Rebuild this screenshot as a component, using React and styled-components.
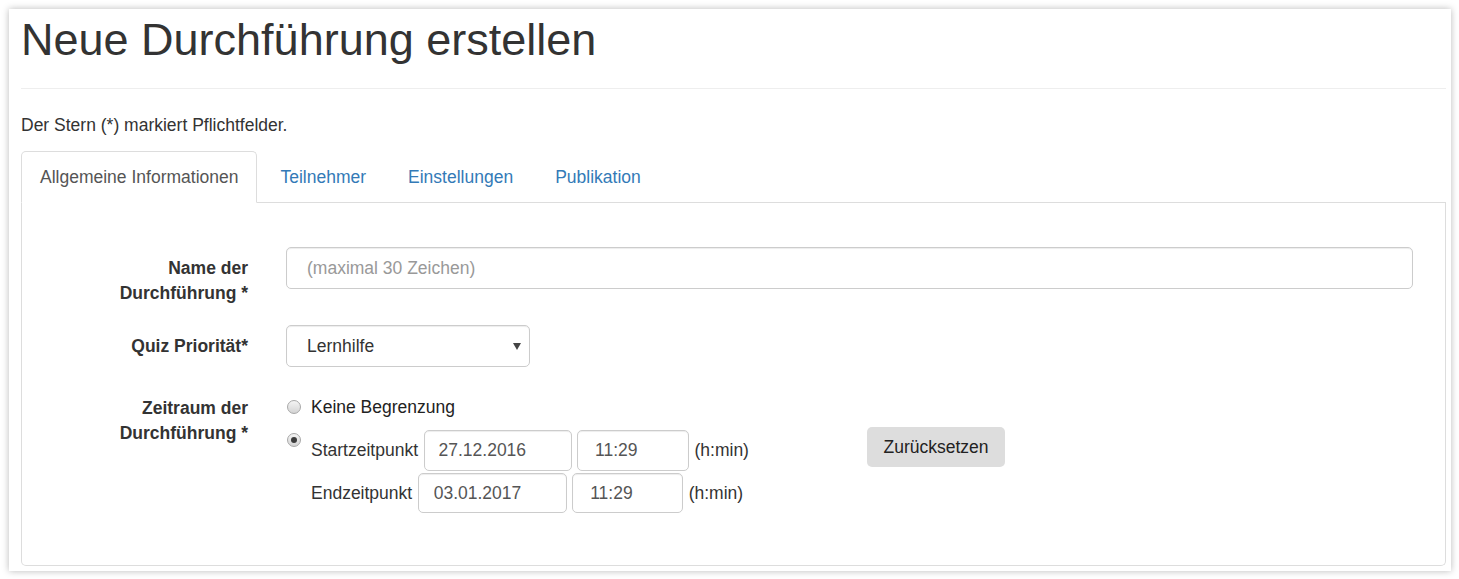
import React from 'react'
import styled, { createGlobalStyle } from 'styled-components'

const GlobalStyle = createGlobalStyle`
  body {
    margin: 0;
    background: #fff;
    font-family: 'Liberation Sans', Arial, sans-serif;
    font-size: 17.5px;
    line-height: 25px;
    color: #333;
  }
  * {
    box-sizing: border-box;
  }
`

const Card = styled.div`
  margin: 9px 8px 8px 9px;
  padding: 0 5px 5px 12px;
  background: #fff;
  box-shadow: 0 0 7px rgba(0, 0, 0, 0.28);
`

const PageHeader = styled.div`
  padding-top: 6px;
  padding-bottom: 23px;
  border-bottom: 1px solid #eee;
`

const Title = styled.h1`
  margin: 0;
  font-size: 45px;
  line-height: 49.5px;
  font-weight: 500;
  color: #333;
`

const Hint = styled.p`
  margin: 24.5px 0 12.5px;
`

const Tabs = styled.ul`
  display: flex;
  margin: 0;
  padding: 0;
  list-style: none;
  border-bottom: 1px solid #ddd;
`

const Tab = styled.li`
  margin-right: 4px;
  margin-bottom: -1px;
  padding: 13px 18px 12px;
  border: 1px solid ${props => (props.active ? '#ddd' : 'transparent')};
  border-bottom-color: ${props => (props.active ? '#fff' : 'transparent')};
  border-radius: 5px 5px 0 0;
  background: ${props => (props.active ? '#fff' : 'transparent')};
  color: ${props => (props.active ? '#555' : '#337ab7')};
  cursor: pointer;
`

const Panel = styled.div`
  border: 1px solid #ddd;
  border-top: none;
  border-radius: 0 0 5px 5px;
  padding: 44px 32px 52px 0;
`

const FormRow = styled.div`
  display: grid;
  grid-template-columns: 226px 1fr;
  column-gap: 38px;
  align-items: start;
  margin-bottom: ${props => (props.last ? '0' : '18.75px')};
`

const Label = styled.label`
  padding-top: 9.5px;
  padding-left: 34px;
  text-align: right;
  font-weight: bold;
  color: #333;
`

const TextInput = styled.input`
  width: 100%;
  height: 42.5px;
  padding: 1px 20px 0;
  border: 1px solid #ccc;
  border-radius: 5px;
  box-shadow: inset 0 1px 1px rgba(0, 0, 0, 0.075);
  font-family: inherit;
  font-size: 17.5px;
  color: #555;
  &::placeholder {
    color: #999;
  }
`

const SelectWrap = styled.div`
  position: relative;
  width: 244px;
`

const Select = styled.select`
  width: 100%;
  height: 42.5px;
  padding: 0 20px;
  border: 1px solid #ccc;
  border-radius: 5px;
  background: #fff;
  box-shadow: inset 0 1px 1px rgba(0, 0, 0, 0.075);
  appearance: none;
  font-family: inherit;
  font-size: 17.5px;
  color: #333;
`

const Caret = styled.svg`
  position: absolute;
  right: 9px;
  top: 17px;
  pointer-events: none;
`

const RadioGroup = styled.div`
  padding-top: 8.75px;
`

const RadioRow = styled.div`
  display: flex;
  align-items: flex-start;
  gap: 10px;
  margin-top: ${props => props.offset || '0'};
  color: #222;
`

const Radio = styled.span`
  flex: none;
  width: 14px;
  height: 14px;
  margin-top: ${props => props.top};
  margin-left: 1px;
  border: 1px solid #a8a8a8;
  border-radius: 50%;
  background: linear-gradient(#f4f4f4, #d4d4d4);
  display: flex;
  align-items: center;
  justify-content: center;
  &::after {
    content: '';
    display: ${props => (props.checked ? 'block' : 'none')};
    width: 6px;
    height: 6px;
    border-radius: 50%;
    background: #3c3c3c;
  }
`

const TimeBlock = styled.div`
  display: flex;
  flex-direction: column;
  gap: 2px;
  padding-top: 3px;
`

const TimeLine = styled.div`
  display: flex;
  align-items: center;
  gap: 5.5px;
  color: #333;
`

const SmallInput = styled.input`
  width: ${props => props.w}px;
  height: 40.5px;
  padding: 0 0 0 ${props => props.pad}px;
  border: 1px solid #ccc;
  border-radius: 5px;
  box-shadow: inset 0 1px 1px rgba(0, 0, 0, 0.075);
  font-family: inherit;
  font-size: 17.5px;
  color: #555;
`

const ResetButton = styled.button`
  align-self: flex-start;
  margin-left: 113px;
  margin-top: -3px;
  height: 40px;
  padding: 0 16px;
  border: none;
  border-radius: 5px;
  background: #ddd;
  font-family: inherit;
  font-size: 17.5px;
  color: #222;
  cursor: pointer;
`

function App() {
  return (
    <>
      <GlobalStyle />
      <Card>
        <PageHeader>
          <Title>Neue Durchführung erstellen</Title>
        </PageHeader>
        <Hint>Der Stern (*) markiert Pflichtfelder.</Hint>
        <Tabs>
          <Tab active>Allgemeine Informationen</Tab>
          <Tab>Teilnehmer</Tab>
          <Tab>Einstellungen</Tab>
          <Tab>Publikation</Tab>
        </Tabs>
        <Panel>
          <FormRow>
            <Label>Name der Durchführung *</Label>
            <TextInput placeholder="(maximal 30 Zeichen)" />
          </FormRow>
          <FormRow>
            <Label>Quiz Priorität*</Label>
            <SelectWrap>
              <Select defaultValue="lernhilfe">
                <option value="lernhilfe">Lernhilfe</option>
              </Select>
              <Caret width="8" height="8" viewBox="0 0 8 8">
                <path d="M0 1 L8 1 L4 8 Z" fill="#444" />
              </Caret>
            </SelectWrap>
          </FormRow>
          <FormRow last>
            <Label>Zeitraum der Durchführung *</Label>
            <RadioGroup>
              <RadioRow>
                <Radio top="5.5px" />
                <span>Keine Begrenzung</span>
              </RadioRow>
              <RadioRow offset="7.5px">
                <Radio checked top="6px" />
                <TimeBlock>
                  <TimeLine>
                    <span>Startzeitpunkt</span>
                    <SmallInput w={148} pad={14} defaultValue="27.12.2016" />
                    <SmallInput w={112} pad={17} defaultValue="11:29" />
                    <span>(h:min)</span>
                    <ResetButton>Zurücksetzen</ResetButton>
                  </TimeLine>
                  <TimeLine>
                    <span>Endzeitpunkt</span>
                    <SmallInput w={149} pad={15} defaultValue="03.01.2017" />
                    <SmallInput w={111} pad={17} defaultValue="11:29" />
                    <span>(h:min)</span>
                  </TimeLine>
                </TimeBlock>
              </RadioRow>
            </RadioGroup>
          </FormRow>
        </Panel>
      </Card>
    </>
  )
}

export default App
